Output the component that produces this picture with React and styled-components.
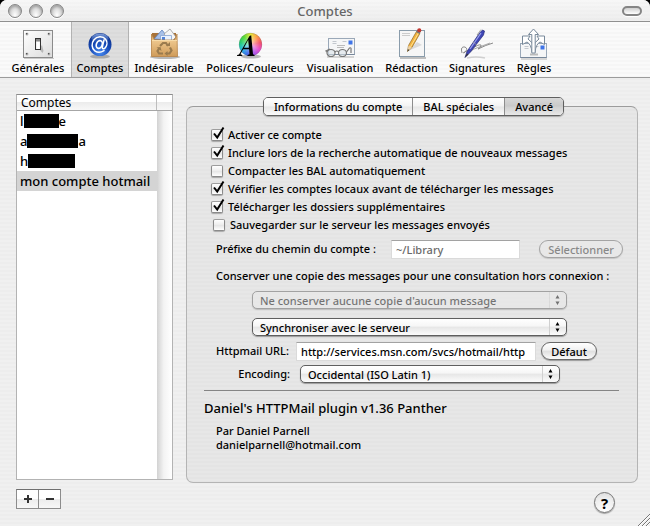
import React, { useState } from 'react';
import styled, { createGlobalStyle, css } from 'styled-components';

const GlobalStyle = createGlobalStyle`
  * { box-sizing: border-box; }
  body {
    margin: 0;
    background: #000;
    color: #000;
    font-family: "Lucida Grande", "Noto Sans", "Open Sans", sans-serif;
    font-size: 11px;
    font-weight: 500;
    line-height: 14px;
  }
  button, input, select { font: inherit; color: inherit; margin: 0; }
`;

const Window = styled.div`
  position: relative;
  min-height: 100vh;
  display: flex;
  flex-direction: column;
  border-radius: 7px 7px 0 0;
  overflow: hidden;
  background: repeating-linear-gradient(#f0f0f0 0 2px, #ededed 2px 4px);
`;

const TitleBar = styled.header`
  height: 22px;
  display: grid;
  grid-template-columns: 1fr auto 1fr;
  align-items: center;
  padding: 0 8px;
  border-bottom: 1px solid #8f8f8f;
  background: linear-gradient(#ffffff66, #e6e6e655), repeating-linear-gradient(#f2f2f2 0 2px, #eeeeee 2px 4px);
`;

const Title = styled.h1`
  margin: 0;
  font-size: 13px;
  font-weight: 500;
  line-height: 20px;
  color: #666;
`;

const Lights = styled.div`
  display: flex;
  gap: 7px;
`;

const Light = styled.button`
  width: 14px;
  height: 14px;
  padding: 0;
  border: 1px solid #858585;
  border-radius: 50%;
  background: radial-gradient(ellipse at 50% 85%, #fff 0, #e2e2e2 40%, #b4b4b4 90%);
  box-shadow: inset 0 2px 2px #8a8a8a88, 0 1px 0 #fff;
`;

const Pill = styled.button`
  justify-self: end;
  width: 20px;
  height: 10px;
  padding: 0;
  border: 2px solid #858585;
  border-radius: 5px;
  background: linear-gradient(#cfcfcf, #fff);
  box-shadow: 0 1px 0 #fff;
`;

const Toolbar = styled.nav`
  height: 56px;
  display: flex;
  padding-left: 5px;
  border-bottom: 1px solid #9b9b9b;
  background: repeating-linear-gradient(#fafafa 0 2px, #f6f6f6 2px 4px);
`;

const Tool = styled.button`
  width: ${(p) => p.$width}px;
  display: flex;
  flex-direction: column;
  align-items: center;
  padding: 4px 0 0;
  border: 0;
  border-left: 1px solid transparent;
  border-right: 1px solid transparent;
  background: none;
  line-height: 16px;
  white-space: nowrap;
  ${(p) => p.$current && css`
    border-color: #b2b2b2;
    background: repeating-linear-gradient(#dedede 0 2px, #dadada 2px 4px);
  `}
  svg { display: block; width: 36px; height: 34px; flex: none; }
`;

const Main = styled.main`
  flex: 1;
  display: flex;
  flex-direction: column;
  padding: 16px 12px 13px 16px;
`;

const Columns = styled.div`
  flex: 1;
  display: flex;
  gap: 13px;
`;

const AccountList = styled.section`
  width: 157px;
  flex: none;
  display: flex;
  flex-direction: column;
  margin-bottom: 3px;
  border: 1px solid #b3b3b3;
  border-top-color: #8c8c8c;
  background: #fff;
`;

const ListHeader = styled.div`
  display: flex;
  height: 16px;
  border-bottom: 1px solid #a6a6a6;
  background: linear-gradient(#fff 0 45%, #ececec 50%, #f8f8f8);
`;

const ListTitle = styled.h2`
  flex: 1;
  margin: 0;
  padding-left: 4px;
  border-right: 1px solid #bdbdbd;
  font-size: 12px;
  font-weight: 400;
  line-height: 15px;
`;

const HeaderCorner = styled.div`
  width: 15px;
`;

const ListBody = styled.div`
  flex: 1;
  display: flex;
`;

const Accounts = styled.ul`
  flex: 1;
  margin: 0;
  padding: 0;
  list-style: none;
`;

const Account = styled.li`
  height: 20px;
  display: flex;
  align-items: center;
  padding-left: 3px;
  font-size: 13px;
  white-space: nowrap;
  background: ${(p) => (p.$current ? '#d4d4d4' : 'none')};
`;

const Redaction = styled.span`
  width: ${(p) => p.$width}px;
  height: 14px;
  background: #000;
`;

const ScrollTrack = styled.div`
  width: 15px;
  background: linear-gradient(90deg, #d2d2d2, #f3f3f3 45%, #fff);
`;

const Detail = styled.section`
  flex: 1;
  min-width: 0;
  display: flex;
  flex-direction: column;
  margin-top: 12px;
  border: 1px solid #b4b4b4;
  border-top-color: #9c9c9c;
  border-radius: 7px;
  background: repeating-linear-gradient(#e7e7e7 0 2px, #e4e4e4 2px 4px);
  padding: 0 14px 16px 17px;
`;

const Tabs = styled.div`
  align-self: center;
  display: flex;
  height: 19px;
  margin-top: -10px;
  border: 1px solid #5f5f5f;
  border-radius: 5px;
  overflow: hidden;
  box-shadow: 0 1px 1px #0004;
`;

const Tab = styled.button`
  border: 0;
  padding: 0 10px;
  font-size: 11px;
  line-height: 16px;
  white-space: nowrap;
  background: ${(p) => (p.$current
    ? 'linear-gradient(#d8d8d8, #c9c9c9 48%, #d0d0d0 52%, #e8e8e8)'
    : 'linear-gradient(#fff, #f3f3f3 48%, #e6e6e6 52%, #fbfbfb)')};
  & + & { border-left: 1px solid #8d8d8d; }
`;

const Options = styled.div`
  display: flex;
  flex-direction: column;
  margin: 10px 0 0 7px;
`;

const Option = styled.label`
  height: 18px;
  display: flex;
  align-items: center;
  gap: 5px;
  padding-left: ${(p) => (p.$indented ? 2 : 0)}px;
  white-space: nowrap;
`;

const TickCell = styled.span`
  width: 12px;
  height: 12px;
  display: grid;
  & > * { grid-area: 1 / 1; }
  svg { width: 16px; height: 16px; margin-top: -3px; pointer-events: none; visibility: hidden; }
  input:checked + svg { visibility: visible; }
`;

const Tick = styled.input`
  appearance: none;
  width: 12px;
  height: 12px;
  border: 1px solid #8a8a8a;
  border-top-color: #9d9d9d;
  border-radius: 2px;
  background: linear-gradient(#fff, #eee 45%, #e4e4e4 50%, #fff);
  box-shadow: 0 1px 1px #0004;
`;

const Fields = styled.div`
  display: flex;
  flex-direction: column;
  padding-left: 12px;
`;

const Line = styled.div`
  display: flex;
  align-items: center;
  height: ${(p) => p.$height}px;
`;

const FieldLabel = styled.label`
  width: ${(p) => p.$width}px;
  flex: none;
  text-align: ${(p) => p.$align || 'left'};
  white-space: nowrap;
`;

const Note = styled.p`
  margin: 0;
  white-space: nowrap;
`;

const TextBox = styled.input`
  flex: 0 1 ${(p) => p.$width}px;
  min-width: 0;
  width: ${(p) => p.$width}px;
  height: 19px;
  padding: 1px 0 0 4px;
  border: 1px solid #dadada;
  border-top-color: #a2a2a2;
  border-radius: 0;
  background: #fff;
  &:disabled { color: #6a6a6a; }
`;

const PushButton = styled.button`
  flex: none;
  height: 18px;
  min-width: ${(p) => p.$width}px;
  margin-left: ${(p) => p.$gap}px;
  padding: 0 8px;
  border: 1px solid #686868;
  border-radius: 9px;
  line-height: 15px;
  white-space: nowrap;
  background: linear-gradient(#fff, #f1f1f1 45%, #dfdfdf 50%, #fafafa);
  box-shadow: 0 1px 1px #0005;
  &:disabled { color: #888; border-color: #a4a4a4; background: #e8e8e8; box-shadow: 0 1px 1px #0002; }
`;

const PopupCell = styled.div`
  flex: 0 1 ${(p) => p.$width}px;
  display: grid;
  grid-template-columns: minmax(0, 1fr) 18px;
  margin-left: ${(p) => p.$indent || 0}px;
  opacity: ${(p) => (p.$dimmed ? 0.5 : 1)};
  svg { grid-area: 1 / 2; width: 18px; height: 18px; pointer-events: none; }
`;

const Popup = styled.select`
  grid-area: 1 / 1 / 2 / 3;
  appearance: none;
  width: 100%;
  height: 18px;
  padding: 0 20px 0 7px;
  border: 1px solid #5f5f5f;
  border-radius: 5px;
  line-height: 15px;
  background: linear-gradient(#fff, #f6f6f6 45%, #e6e6e6 50%, #fcfcfc);
  box-shadow: 0 1px 1px #0005;
  &:disabled { opacity: 1; color: #000; background: #eaeaea; }
`;

const Rule = styled.hr`
  align-self: stretch;
  margin: 2px 4px 9px 0;
  border: 0;
  border-top: 1px solid #858585;
`;

const PluginTitle = styled.h2`
  margin: 0 0 8px;
  font-size: 13px;
  font-weight: 500;
  line-height: 16px;
`;

const Footer = styled.footer`
  display: flex;
  justify-content: space-between;
  align-items: flex-start;
  padding: 6px 23px 0 0;
`;

const Pair = styled.div`
  display: flex;
  border: 1px solid #8c8c8c;
  border-top-color: #6f6f6f;
`;

const Square = styled.button`
  width: 21px;
  height: 18px;
  padding: 0;
  display: grid;
  place-items: center;
  border: 0;
  background: linear-gradient(#fff 50%, #ececec 50%, #f7f7f7);
  & + & { width: 22px; border-left: 1px solid #8c8c8c; }
  svg { display: block; width: 10px; height: 10px; }
`;

const Help = styled.button`
  width: 21px;
  height: 21px;
  margin-top: 3px;
  padding: 0;
  border: 1px solid #757575;
  border-radius: 50%;
  font-size: 15px;
  font-weight: 700;
  line-height: 18px;
  background: radial-gradient(circle at 50% 90%, #fff, #eee 60%, #d8d8d8);
  box-shadow: 0 1px 1px #0005;
`;

const Grip = styled.svg`
  position: absolute;
  right: 0;
  bottom: 0;
  width: 12px;
  height: 12px;
`;

const SwitchIcon = () => (
  <svg viewBox="0 0 36 34" aria-hidden="true">
    <defs>
      <linearGradient id="plate" x2="1" y2="1"><stop stopColor="#fff" /><stop offset="1" stopColor="#dcdcdc" /></linearGradient>
    </defs>
    <path d="M4 32h30v1H4z" fill="#999" opacity=".5" />
    <rect x="3.5" y="4.5" width="29" height="27" fill="url(#plate)" stroke="#8b8b8b" />
    {[[7, 8], [29, 8], [7, 28], [29, 28]].map(([x, y]) => (
      <g key={`${x}-${y}`}><circle cx={x} cy={y} r="1.5" fill="#bbb" /><circle cx={x - 0.3} cy={y - 0.3} r=".8" fill="#444" /></g>
    ))}
    <path d="M19 23l3.500 4 1-2-1.500-6z" fill="#999" opacity=".6" />
    <rect x="15.500" y="12.500" width="5" height="11" fill="#f2f2f2" stroke="#333" />
    <path d="M16 13h4v2.500h-4z" fill="#888" />
    <path d="M17 16h2.500v7H17z" fill="#fff" />
  </svg>
);

const AtIcon = () => (
  <svg viewBox="0 0 36 34" aria-hidden="true">
    <defs>
      <radialGradient id="ball" cx=".5" cy=".85" r=".85"><stop stopColor="#4b8cf0" /><stop offset=".5" stopColor="#174bb8" /><stop offset="1" stopColor="#0b2b82" /></radialGradient>
      <linearGradient id="shine" x2="0" y2="1"><stop stopColor="#b5d2ff" stopOpacity=".7" /><stop offset="1" stopColor="#6ea0f0" stopOpacity="0" /></linearGradient>
    </defs>
    <ellipse cx="18" cy="30.500" rx="10" ry="2" fill="#777" opacity=".5" />
    <circle cx="18" cy="18.500" r="11.500" fill="url(#ball)" />
    <ellipse cx="18" cy="12.500" rx="8.500" ry="5" fill="url(#shine)" />
    <g fill="none" stroke="#fff" strokeLinecap="round">
      <ellipse cx="17.300" cy="18.500" rx="2.900" ry="4" strokeWidth="1.700" transform="rotate(20 17.300 18.500)" />
      <path d="M22 14l-1.700 7.200c-.3 2 1.800 1.900 3 .5 1.900-2.200 2.300-5.800.3-8.400-2.800-3.700-8.700-3.200-11.600.4-2.800 3.500-2.500 8.700.8 11.100 2.700 2 6.400 1.600 9.200-.2" strokeWidth="1.500" />
    </g>
  </svg>
);

const BagIcon = () => (
  <svg viewBox="0 0 36 34" aria-hidden="true">
    <defs><linearGradient id="bag" x2="0" y2="1"><stop stopColor="#c99455" /><stop offset=".3" stopColor="#edc68c" /><stop offset="1" stopColor="#cf9b59" /></linearGradient></defs>
    <ellipse cx="19" cy="31" rx="15" ry="2" fill="#777" opacity=".5" />
    <path d="M6 7h24v7H6z" fill="#a87239" />
    <path d="M8 13l8-9 8 10z" fill="#a7c0e8" stroke="#5f82bb" strokeWidth=".8" />
    <path d="M18 8l6-5 6 8-5 5z" fill="#f5f5f5" stroke="#9a9a9a" strokeWidth=".8" />
    <path d="M14.500 9.500h11v8h-11z" fill="#eaf1fc" stroke="#89a5d2" strokeWidth=".8" />
    <path d="M16 11h3v3h-3z" fill="#5284d8" />
    <path d="M5.500 8l3 6h20l2.500-6 .5 22.500h-26z" fill="url(#bag)" stroke="#b68345" strokeWidth=".8" />
    <path d="M6 14.500h25" stroke="#f7dba8" />
    <g fill="none" stroke="#9a7b4e" strokeWidth="2.200">
      <path d="M14 20l3-3h3l2 3" />
      <path d="M24 21.500l1.500 3-2 3h-3" />
      <path d="M17 27.500h-4l-1.500-2.500 2-3" />
    </g>
    <path d="M20 20h4v-4zM21.500 25v5l-3-2.500zM10.500 21.500l4-.5 1 4z" fill="#9a7b4e" />
  </svg>
);

const WheelFill = styled.div`
  width: 23px;
  height: 23px;
  border-radius: 50%;
  background: radial-gradient(circle, #ffffffb0 0, #fff0 60%), conic-gradient(#e8e83c, #ff9a45, #f4506a, #e84dd0, #a456ea, #3f6cea, #27bfe8, #22cf78, #58d935, #e8e83c);
`;

const FontsIcon = () => (
  <svg viewBox="0 0 36 34" aria-hidden="true">
    <ellipse cx="19" cy="30.500" rx="10" ry="2" fill="#777" opacity=".5" />
    <foreignObject x="7" y="7" width="24" height="24"><WheelFill /></foreignObject>
    <circle cx="18.500" cy="18.500" r="11.300" fill="none" stroke="#5555" strokeWidth=".7" />
    <path d="M5 30l.2-1 1.800-.6L17.500 10l1.700-.8 1.800 19 1.600.8-.2 1h-7l.2-1 1.900-.7-.4-5h-6L8.500 28.300l1.900.7-.2 1zM12 21.800h4.900l-.7-8z" fill="#000" fillRule="evenodd" />
  </svg>
);

const Letter = ({ x, y, w, h }) => (
  <g>
    <rect x={x} y={y} width={w} height={h} fill="#f5f6f7" stroke="#9aa8b8" />
    <path d={`M${x} ${y + h}h${w}`} stroke="#77879a" />
    <path d={`M${x + 4} ${y + 3}h4m-4 2h4m6-2h4`} stroke="#c3c8ce" />
    <rect x={x + w - 6} y={y + 2} width="4" height="4" fill="#3f74e8" />
  </g>
);

const GlassesIcon = () => (
  <svg viewBox="0 0 36 34" aria-hidden="true">
    <path d="M5 31h27" stroke="#999" strokeWidth="2" opacity=".35" />
    <Letter x={6.5} y={12.5} w={26} h={16} />
    <path d="M15 19.500h8m-8 2h7" stroke="#bbb" />
    <g fill="#dce4ea99" stroke="#777" strokeWidth="1.200">
      <ellipse cx="9" cy="27" rx="4" ry="3.500" />
      <ellipse cx="20.500" cy="27" rx="4" ry="3.500" />
      <path d="M13 26q2-2 3.500 0M5 26l-1-1 4-2M24.500 26l3-4q2-1 1.500 2v3" fill="none" />
    </g>
  </svg>
);

const PencilIcon = () => (
  <svg viewBox="0 0 36 34" aria-hidden="true">
    <path d="M6 32h26" stroke="#888" strokeWidth="2" opacity=".5" />
    <rect x="5.500" y="4.500" width="25" height="26" fill="#f6f6f6" stroke="#8a9cab" />
    <path d="M8 7.500h8M8 9.500h8" stroke="#ccc" />
    <path d="M14 25l9-9 5 3z" fill="#999" opacity=".3" />
    <path d="M13.500 25.500l1-6L22.500 5.500l3.400 2-8 14z" fill="#f3b33e" stroke="#8d6827" strokeWidth=".7" />
    <path d="M16.500 20.800L24.500 7" stroke="#ffe191" strokeWidth="1" />
    <path d="M13.500 25.500l1-6 3.400 2z" fill="#ecd1a3" />
    <path d="M13.500 25.500l.4-2.300 1.500.9z" fill="#222" />
    <path d="M22 6l1.600-2.600 3.400 2-1.600 2.600z" fill="#777" />
    <circle cx="25.300" cy="4.200" r="2" fill="#c4372f" />
  </svg>
);

const PenIcon = () => (
  <svg viewBox="0 0 36 34" aria-hidden="true">
    <path d="M8 32q9-2 18 0" fill="none" stroke="#999" strokeWidth="1.500" opacity=".4" />
    <path d="M3 27q-2-7 3-6 4 2-1 6-3 0 8-4 6-5 9-4 1 2-3 4 8-4 15-6" fill="none" stroke="#8b8b8b" strokeWidth="1" />
    <path d="M8 28l7-5 16-6" fill="none" stroke="#888" strokeWidth=".7" />
    <path d="M6 31.500l2-6L20.500 7l3-3 2 1-1 4L11.500 26z" fill="#3f46b6" stroke="#252a77" strokeWidth=".7" />
    <path d="M11 23L22 7" stroke="#9ba1ee" strokeWidth="1.200" />
    <path d="M14 16l4.500 3.500M20 8l-2 1 4-5.500" stroke="#999" strokeWidth=".8" fill="none" />
    <path d="M6 31.500l2-4 1.500 1z" fill="#333" />
  </svg>
);

const RulesIcon = () => (
  <svg viewBox="0 0 36 34" aria-hidden="true">
    <path d="M5 33h26" stroke="#999" strokeWidth="1.500" opacity=".5" />
    <Letter x={4.5} y={17.5} w={26} h={14} />
    <path d="M14 28.500h8" stroke="#bbb" strokeWidth="2" />
    <g fill="#fff" stroke="#78899a" strokeWidth="1" strokeLinejoin="round">
      <path d="M16 26q-1-8-5-10l-4.500 2.500v-8.500H14l-2 3q5 3 6 9z" />
      <path d="M19 26q1-8 5-10l4.500 2.500v-8.500H21l2 3q-5 3-6 9z" />
      <path d="M15.800 27V8.500h-3.300l5-5.500 5 5.500h-3.300V27z" />
    </g>
  </svg>
);

const Check = () => (
  <svg viewBox="0 0 16 16" aria-hidden="true"><path d="M3 7.500l3.200 4L12.500 1.500" fill="none" stroke="#000" strokeWidth="2" /></svg>
);

const Arrows = () => (
  <svg viewBox="0 0 18 18" aria-hidden="true">
    <path d="M.5 1v16" stroke="#d0d0d0" />
    <path d="M6.500 7.500L8.500 4l2 3.500zM6.500 10.500l2 3.500 2-3.500z" fill="#000" />
  </svg>
);

const tools = [
  ['Générales', 66, SwitchIcon],
  ['Comptes', 58, AtIcon],
  ['Indésirable', 70, BagIcon],
  ['Polices/Couleurs', 102, FontsIcon],
  ['Visualisation', 78, GlassesIcon],
  ['Rédaction', 65, PencilIcon],
  ['Signatures', 66, PenIcon],
  ['Règles', 48, RulesIcon],
];

const accounts = [
  { before: 'l', mask: 35, after: 'e' },
  { before: 'a', mask: 51, after: 'a' },
  { before: 'h', mask: 47 },
  { before: 'mon compte hotmail' },
];

const options = [
  ['Activer ce compte', true],
  ['Inclure lors de la recherche automatique de nouveaux messages', true],
  ['Compacter les BAL automatiquement', false],
  ['Vérifier les comptes locaux avant de télécharger les messages', true],
  ['Télécharger les dossiers supplémentaires', true],
  ['Sauvegarder sur le serveur les messages envoyés', false, true],
];

const tabs = ['Informations du compte', 'BAL spéciales', 'Avancé'];

export default function App() {
  const [tool, setTool] = useState('Comptes');
  const [tab, setTab] = useState('Avancé');
  const [account, setAccount] = useState(3);

  return (
    <>
      <GlobalStyle />
      <Window>
        <TitleBar>
          <Lights>
            <Light aria-label="Fermer" />
            <Light aria-label="Réduire" />
            <Light aria-label="Agrandir" />
          </Lights>
          <Title>Comptes</Title>
          <Pill aria-label="Barre d’outils" />
        </TitleBar>
        <Toolbar>
          {tools.map(([name, width, Icon]) => (
            <Tool key={name} $width={width} $current={name === tool} onClick={() => setTool(name)}>
              <Icon />
              {name}
            </Tool>
          ))}
        </Toolbar>
        <Main>
          <Columns>
            <AccountList>
              <ListHeader>
                <ListTitle>Comptes</ListTitle>
                <HeaderCorner />
              </ListHeader>
              <ListBody>
                <Accounts>
                  {accounts.map((a, i) => (
                    <Account key={a.before} $current={i === account} onClick={() => setAccount(i)}>
                      {a.before}
                      {a.mask && <Redaction $width={a.mask} />}
                      {a.after}
                    </Account>
                  ))}
                </Accounts>
                <ScrollTrack />
              </ListBody>
            </AccountList>
            <Detail>
              <Tabs role="tablist">
                {tabs.map((name) => (
                  <Tab key={name} role="tab" aria-selected={name === tab} $current={name === tab} onClick={() => setTab(name)}>
                    {name}
                  </Tab>
                ))}
              </Tabs>
              <Options>
                {options.map(([text, checked, indented]) => (
                  <Option key={text} $indented={indented}>
                    <TickCell>
                      <Tick type="checkbox" defaultChecked={checked} />
                      <Check />
                    </TickCell>
                    {text}
                  </Option>
                ))}
              </Options>
              <Fields>
                <Line $height={30}>
                  <FieldLabel htmlFor="prefix" $width={175}>Préfixe du chemin du compte :</FieldLabel>
                  <TextBox id="prefix" $width={131} defaultValue="~/Library" disabled />
                  <PushButton $width={82} $gap={19} disabled>Sélectionner</PushButton>
                </Line>
                <Line $height={24}>
                  <Note>Conserver une copie des messages pour une consultation hors connexion :</Note>
                </Line>
                <Line $height={24}>
                  <PopupCell $width={315} $indent={36} $dimmed>
                    <Popup aria-label="Copie des messages" disabled>
                      <option>Ne conserver aucune copie d'aucun message</option>
                    </Popup>
                    <Arrows />
                  </PopupCell>
                </Line>
                <Line $height={30}>
                  <PopupCell $width={315} $indent={36}>
                    <Popup aria-label="Synchronisation">
                      <option>Synchroniser avec le serveur</option>
                    </Popup>
                    <Arrows />
                  </PopupCell>
                </Line>
                <Line $height={18}>
                  <FieldLabel htmlFor="url" $width={80}>Httpmail URL:</FieldLabel>
                  <TextBox id="url" $width={240} defaultValue="http://services.msn.com/svcs/hotmail/http" />
                  <PushButton $width={56} $gap={5}>Défaut</PushButton>
                </Line>
                <Line $height={28}>
                  <FieldLabel htmlFor="encoding" $width={74} $align="right">Encoding:</FieldLabel>
                  <PopupCell $width={260} $indent={10}>
                    <Popup id="encoding">
                      <option>Occidental (ISO Latin 1)</option>
                    </Popup>
                    <Arrows />
                  </PopupCell>
                </Line>
              </Fields>
              <Rule />
              <PluginTitle>Daniel's HTTPMail plugin v1.36 Panther</PluginTitle>
              <Fields>
                <Note>Par Daniel Parnell</Note>
                <Note>danielparnell@hotmail.com</Note>
              </Fields>
            </Detail>
          </Columns>
          <Footer>
            <Pair>
              <Square aria-label="Ajouter"><svg viewBox="0 0 10 10"><path d="M5 1v8M1 5h8" stroke="#333" strokeWidth="2" /></svg></Square>
              <Square aria-label="Supprimer"><svg viewBox="0 0 10 10"><path d="M1 5h8" stroke="#333" strokeWidth="2" /></svg></Square>
            </Pair>
            <Help aria-label="Aide">?</Help>
          </Footer>
        </Main>
        <Grip viewBox="0 0 12 12" aria-hidden="true">
          <path d="M0 12L12 0M4 12l8-8M8 12l4-4" stroke="#777" />
          <path d="M1 12L12 1M5 12l7-7M9 12l3-3" stroke="#fff" />
        </Grip>
      </Window>
    </>
  );
}
